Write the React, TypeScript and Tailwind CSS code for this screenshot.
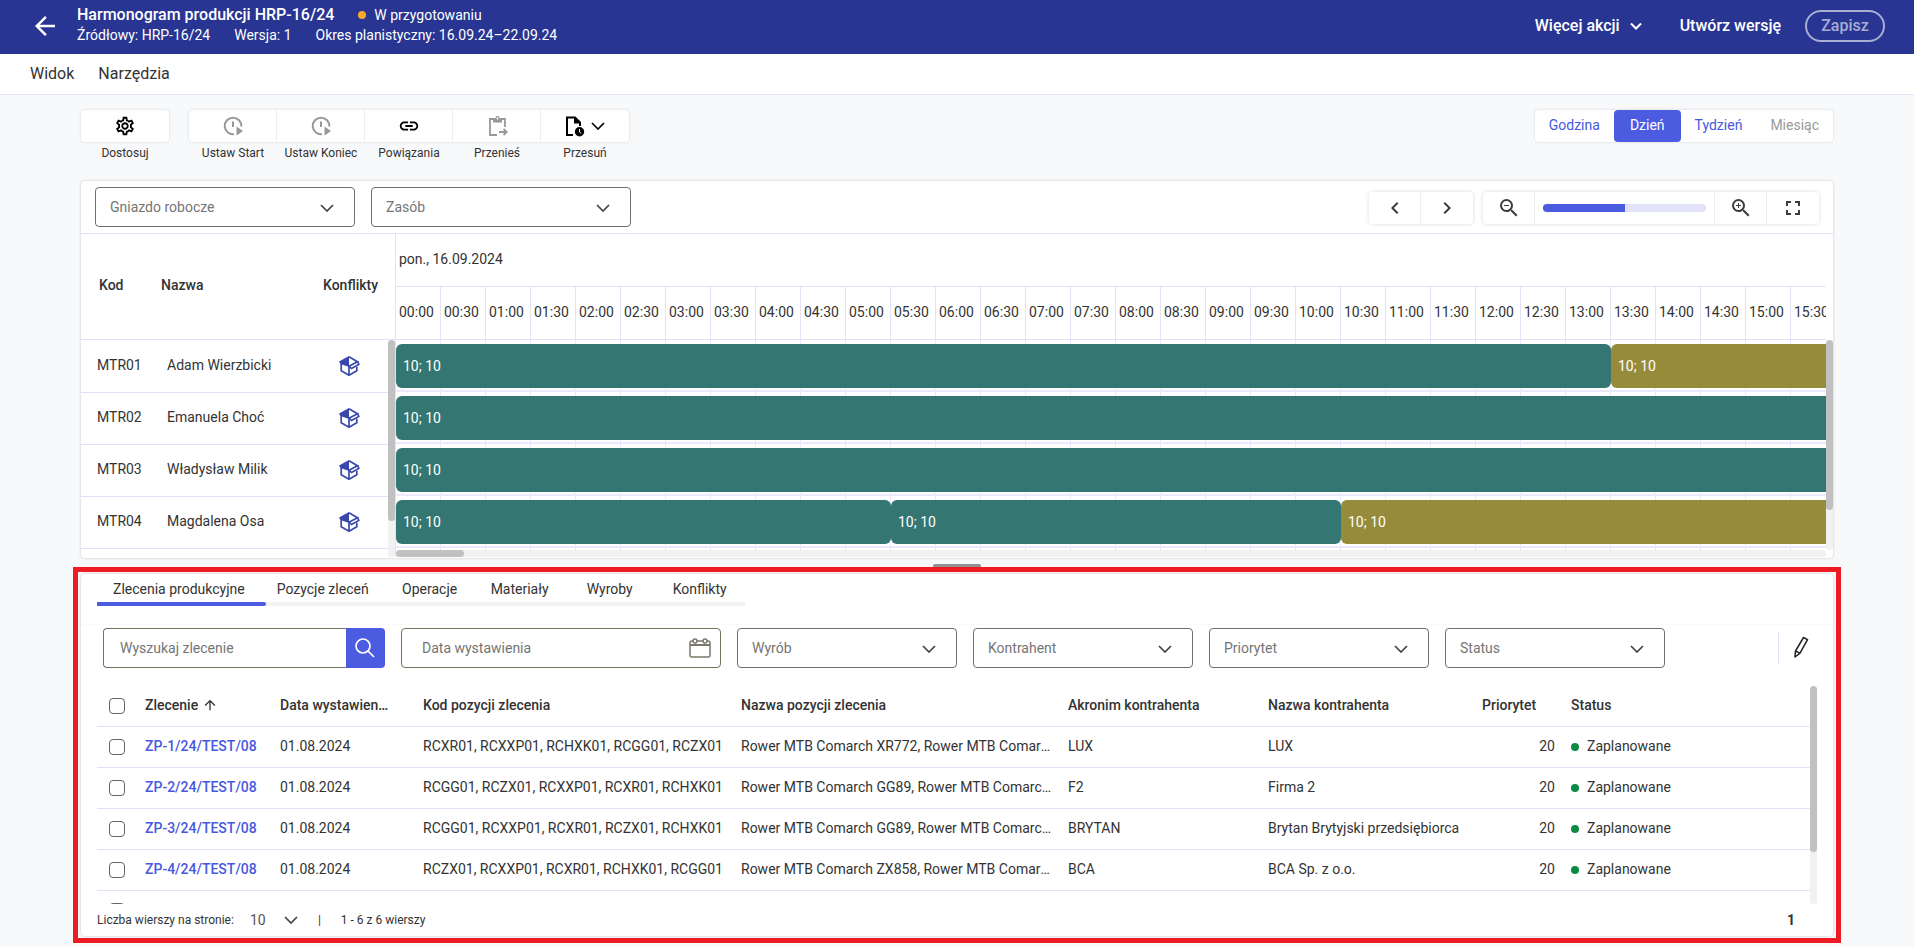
import type { ReactNode } from "react";
import { MdArrowBack, MdArrowUpward, MdChevronLeft, MdChevronRight, MdFullscreen, MdLink, MdOutlineSettings, MdZoomIn, MdZoomOut } from "react-icons/md";

const CELL = 45;

const slots = Array.from({ length: 32 }, (_, i) => {
  const h = String(Math.floor(i / 2)).padStart(2, "0");
  return `${h}:${i % 2 ? "30" : "00"}`;
});

// from / to are counted in half-hour slots
const resources = [
  { code: "MTR01", name: "Adam Wierzbicki", bars: [{ from: 0, to: 27, tone: "teal" }, { from: 27, to: 40, tone: "olive" }] },
  { code: "MTR02", name: "Emanuela Choć", bars: [{ from: 0, to: 40, tone: "teal" }] },
  { code: "MTR03", name: "Władysław Milik", bars: [{ from: 0, to: 40, tone: "teal" }] },
  { code: "MTR04", name: "Magdalena Osa", bars: [{ from: 0, to: 11, tone: "teal" }, { from: 11, to: 21, tone: "teal" }, { from: 21, to: 40, tone: "olive" }] },
];

const orders = [
  { id: "ZP-1/24/TEST/08", codes: "RCXR01, RCXXP01, RCHXK01, RCGG01, RCZX01", names: "Rower MTB Comarch XR772, Rower MTB Comarch", short: "LUX", full: "LUX" },
  { id: "ZP-2/24/TEST/08", codes: "RCGG01, RCZX01, RCXXP01, RCXR01, RCHXK01", names: "Rower MTB Comarch GG89, Rower MTB Comarch ZX", short: "F2", full: "Firma 2" },
  { id: "ZP-3/24/TEST/08", codes: "RCGG01, RCXXP01, RCXR01, RCZX01, RCHXK01", names: "Rower MTB Comarch GG89, Rower MTB Comarch XR", short: "BRYTAN", full: "Brytan Brytyjski przedsiębiorca" },
  { id: "ZP-4/24/TEST/08", codes: "RCZX01, RCXXP01, RCXR01, RCHXK01, RCGG01", names: "Rower MTB Comarch ZX858, Rower MTB Comarch", short: "BCA", full: "BCA Sp. z o.o." },
];

const tabs = ["Zlecenia produkcyjne", "Pozycje zleceń", "Operacje", "Materiały", "Wyroby", "Konflikty"];

function Chevron({ className = "" }: { className?: string }) {
  return (
    <svg aria-hidden viewBox="0 0 14 8" className={`h-2 w-3.5 fill-none stroke-current stroke-[1.7] ${className}`}>
      <path d="M1 1l6 6 6-6" />
    </svg>
  );
}

function ClockPlayIcon() {
  return (
    <svg aria-hidden viewBox="0 0 24 24" className="size-6 fill-none stroke-current stroke-2">
      <path d="M13 20.200A8.300 8.300 0 1 1 20.300 12.500" />
      <path d="M12 7.500V13" />
      <path d="M15.500 12.500v9l6.500-4.500z" className="fill-current stroke-none" />
    </svg>
  );
}

function ClipboardMoveIcon() {
  return (
    <svg aria-hidden viewBox="0 0 24 24" className="size-6 fill-none stroke-current stroke-[1.8]">
      <path d="M20 13V5H5v16h7" />
      <path d="M8 4h2.500a2 2 0 0 1 4 0H17v4.500H8z" className="fill-current stroke-none" />
      <circle cx="12.500" cy="4.500" r="0.900" className="fill-white stroke-none" />
      <path d="M14 18h7.500M18.500 14.800l3.200 3.200-3.200 3.200" />
    </svg>
  );
}

function FileClockIcon() {
  return (
    <svg aria-hidden viewBox="4 0 24 24" className="size-6 fill-none stroke-current stroke-2">
      <path d="M12 21H6V3.500h8l5 5V12" />
      <path d="M13 3.500v6h6.500z" className="fill-current stroke-none" />
      <circle cx="18.500" cy="17.800" r="4.700" className="fill-current stroke-none" />
      <path d="M18.500 15v3l1.700 1.500" className="stroke-white stroke-1" />
    </svg>
  );
}

function BoxIcon() {
  return (
    <svg aria-hidden viewBox="0 0 24 24" className="size-6 fill-none stroke-[#3949ab] stroke-[1.7]">
      <path d="M12 2L2 7.500l1.500 2.500 8.500 3z" className="fill-[#3949ab] stroke-none" />
      <path d="M12 2.700l8.500 5L12 12.300" />
      <path d="M4.200 8.500v8.200l7.800 4.500 7.800-4.500v-4" />
      <path d="M12 12v9.300" />
      <path d="M20.500 7.700l1.300 2.800-7.300 4-2.500-2.500" />
    </svg>
  );
}

function CalendarIcon() {
  return (
    <svg aria-hidden viewBox="0 0 22 20" className="h-5 w-[22px] shrink-0 fill-none stroke-[#7b7868] stroke-[1.5]">
      <rect x="1" y="3" width="20" height="16" rx="2" />
      <path d="M1 7h20" className="stroke-2" />
      <circle cx="6" cy="3" r="2" className="fill-white" />
      <circle cx="16" cy="3" r="2" className="fill-white" />
    </svg>
  );
}

function PencilIcon() {
  return (
    <svg aria-hidden viewBox="0 0 16 22" className="h-[22px] w-4 fill-none stroke-[#222] stroke-[1.5]">
      <path d="M10.500 1.500l4 2.200-7.500 13.500-5 3.800.5-6z" strokeLinejoin="round" />
      <path d="M2.500 15l4.500 2.200" />
    </svg>
  );
}

function ToolButton({ label, disabled, children }: { label: string; disabled?: boolean; children: ReactNode }) {
  return (
    <button type="button" disabled={disabled} aria-label={label} className={`flex h-8 w-[88px] items-center justify-center gap-0.5 border-r border-[#eeeef2] last:border-r-0 ${disabled ? "text-[#999]" : "text-black"}`}>
      {children}
    </button>
  );
}

function SelectBox({ label, className }: { label: string; className: string }) {
  return (
    <div className={`grid h-10 items-center ${className}`}>
      <select aria-label={label} className="col-start-1 row-start-1 h-10 w-full appearance-none rounded border border-[#6e6e6e] bg-white px-3.5 pb-px text-sm text-[#757575]">
        <option>{label}</option>
      </select>
      <Chevron className="pointer-events-none col-start-1 row-start-1 mt-0.5 mr-[21px] justify-self-end text-[#444]" />
    </div>
  );
}

function Checkbox({ label }: { label: string }) {
  return <input type="checkbox" aria-label={label} className="block size-4 appearance-none rounded border border-[#666] bg-white" />;
}

export default function App() {
  return (
    <div className="min-h-screen bg-[#f8f9fb] pb-1 font-['Roboto',sans-serif] text-sm text-[#333]">
      <header className="flex h-[54px] items-center bg-[#283593] pr-[29px] pb-0.5 pl-[30px] text-white">
        <button type="button" aria-label="Wstecz" className="mr-[17px]">
          <MdArrowBack className="size-[30px]" />
        </button>
        <div className="mb-0.5 leading-5">
          <div className="flex items-center">
            <h1 className="text-base leading-5 font-medium">Harmonogram produkcji HRP-16/24</h1>
            <span className="mr-2 ml-6 size-2 rounded-full bg-[#f9a825]" />
            <span>W przygotowaniu</span>
          </div>
          <div className="flex gap-6">
            <span>Źródłowy: HRP-16/24</span>
            <span>Wersja: 1</span>
            <span>Okres planistyczny: 16.09.24–22.09.24</span>
          </div>
        </div>
        <div className="ml-auto flex items-center text-base font-medium">
          <button type="button" className="flex items-center gap-2.5">
            Więcej akcji
            <svg aria-hidden viewBox="0 0 14 8" className="h-2 w-3.5 fill-none stroke-current stroke-2">
              <path d="M1 1.500l5 5 5-5" />
            </svg>
          </button>
          <button type="button" className="ml-9">Utwórz wersję</button>
          <button type="button" disabled className="ml-6 h-8 w-20 rounded-full border-2 border-white/60 text-white/60">Zapisz</button>
        </div>
      </header>

      <nav className="flex h-[41px] items-center gap-6 border-b border-[#e2e2f6] bg-white px-[30px] pb-px text-base">
        <a href="#widok">Widok</a>
        <a href="#narzedzia">Narzędzia</a>
      </nav>

      <main>
        <div className="mx-[81px] mt-[15px] flex items-start">
          <div>
            <div className="flex rounded bg-white shadow-[0_0_3px_rgba(0,0,0,0.15)]">
              <ToolButton label="Dostosuj"><MdOutlineSettings className="size-[22px]" /></ToolButton>
            </div>
            <p className="mt-[3px] text-center text-xs leading-4">Dostosuj</p>
          </div>
          <div className="ml-5">
            <div className="flex rounded bg-white shadow-[0_0_3px_rgba(0,0,0,0.15)]">
              <ToolButton label="Ustaw Start" disabled><ClockPlayIcon /></ToolButton>
              <ToolButton label="Ustaw Koniec" disabled><ClockPlayIcon /></ToolButton>
              <ToolButton label="Powiązania"><MdLink className="size-[22px]" /></ToolButton>
              <ToolButton label="Przenieś" disabled><ClipboardMoveIcon /></ToolButton>
              <ToolButton label="Przesuń"><FileClockIcon /><Chevron /></ToolButton>
            </div>
            <div className="mt-[3px] grid grid-cols-5 text-center text-xs leading-4">
              <span>Ustaw Start</span>
              <span>Ustaw Koniec</span>
              <span>Powiązania</span>
              <span>Przenieś</span>
              <span>Przesuń</span>
            </div>
          </div>
          <div className="ml-auto flex h-8 rounded bg-white text-[#4758e0] shadow-[0_0_3px_rgba(0,0,0,0.15)] *:pb-0.5">
            <button type="button" className="px-3.5">Godzina</button>
            <button type="button" className="rounded bg-[#4b5ce1] px-4 text-white">Dzień</button>
            <button type="button" className="px-3.5">Tydzień</button>
            <button type="button" disabled className="px-3.5 text-[#999]">Miesiąc</button>
          </div>
        </div>

        <section className="mx-[81px] mt-5 overflow-hidden rounded bg-white pb-px shadow-[0_0_3px_rgba(0,0,0,0.2)]">
          <div className="flex h-[53px] items-center gap-4 border-b border-[#e2e2f6] px-3.5">
            <SelectBox label="Gniazdo robocze" className="w-[260px]" />
            <SelectBox label="Zasób" className="w-[260px]" />
            <div className="mt-0.5 ml-auto flex h-8 rounded text-[#3c3c3c] shadow-[0_0_4px_rgba(0,0,0,0.15)]">
              <button type="button" aria-label="Poprzedni" className="flex w-[52px] items-center justify-center border-r border-[#eeeef2]"><MdChevronLeft className="size-6" /></button>
              <button type="button" aria-label="Następny" className="flex w-[52px] items-center justify-center"><MdChevronRight className="size-6" /></button>
            </div>
            <div className="mt-0.5 -ml-1.5 flex h-8 rounded text-[#3c3c3c] shadow-[0_0_4px_rgba(0,0,0,0.15)]">
              <button type="button" aria-label="Pomniejsz" className="flex w-[52px] items-center justify-center border-r border-[#eeeef2]"><MdZoomOut className="size-6" /></button>
              <div className="flex w-[180px] items-center border-r border-[#eeeef2] px-2">
                <div className="h-2 w-full overflow-hidden rounded-full bg-[#e2e3f9]">
                  <div className="h-2 w-1/2 bg-[#4b5ce1]" />
                </div>
              </div>
              <button type="button" aria-label="Powiększ" className="flex w-[52px] items-center justify-center border-r border-[#eeeef2]"><MdZoomIn className="size-6" /></button>
              <button type="button" aria-label="Pełny ekran" className="flex w-[52px] items-center justify-center"><MdFullscreen className="size-6" /></button>
            </div>
          </div>

          <div className="flex">
            <div className="w-[314px] shrink-0">
              <div className="flex h-[106px] items-center border-b border-[#e2e2f6] pb-1 pl-[18px] font-medium">
                <span className="w-[62px]">Kod</span>
                <span className="w-[162px]">Nazwa</span>
                <span>Konflikty</span>
              </div>
              <div className="flex h-[217px] overflow-hidden">
                <div className="grow">
                  {resources.map((r) => (
                    <div key={r.code} className="-mb-px flex h-[53px] items-center border-b border-[#e2e2f6] pl-4">
                      <span className="w-[70px] pb-0.5">{r.code}</span>
                      <span className="w-[170px] pb-0.5">{r.name}</span>
                      <BoxIcon />
                    </div>
                  ))}
                </div>
                <div className="w-[7px] rounded bg-[#f1f1f1]">
                  <div className="h-[181px] rounded bg-[#c1c1c1]" />
                </div>
              </div>
            </div>

            <div className="flex min-w-0 grow border-l border-[#e2e2f6]">
              <div className="min-w-0 grow overflow-hidden">
                <div className="flex h-[53px] items-center border-b border-[#e2e2f6] pb-0.5 pl-[3px]">pon., 16.09.2024</div>
                <div className="flex h-[53px] border-b border-[#e2e2f6]">
                  {slots.map((s) => (
                    <div key={s} className="flex w-[45px] shrink-0 items-center border-r border-[#e2e2f6] pb-0.5 pl-[3px]">{s}</div>
                  ))}
                </div>
                <div className="h-[210px] overflow-hidden bg-[repeating-linear-gradient(to_right,transparent_0_44px,#e9e9fb_44px_45px)]">
                  {resources.map((r) => (
                    <div key={r.code} className="flex h-[52px] border-b-2 border-[#e9e9fb] pt-1">
                      {r.bars.map((b) => (
                        <div
                          key={b.from}
                          className={`flex h-11 shrink-0 items-center rounded-md pl-[7px] text-white ${b.tone === "teal" ? "bg-[#347672]" : "bg-[#968b3a]"}`}
                          style={{ width: (b.to - b.from) * CELL }}
                        >
                          10; 10
                        </div>
                      ))}
                    </div>
                  ))}
                </div>
                <div className="h-[7px] rounded bg-[#f1f1f1]">
                  <div className="h-[7px] w-[68px] rounded bg-[#c1c1c1]" />
                </div>
              </div>
              <div className="mt-[106px] h-[210px] w-[7px] shrink-0 rounded bg-[#f1f1f1]">
                <div className="h-[170px] rounded bg-[#c1c1c1]" />
              </div>
            </div>
          </div>
        </section>

        <div className="mx-auto mt-1.5 h-[3px] w-12 rounded-t-xs bg-[#8f9194]" />

        <div className="mx-[73px] border-5 border-[#ed1c24] px-[3px] py-0.5">
          <section className="rounded bg-white shadow-[0_0_3px_rgba(0,0,0,0.2)]">
            <div className="flex border-b border-[#fafafa] pb-[18px] pl-4">
              <div>
                <div role="tablist" className="flex h-7 pt-0.5">
                  {tabs.map((t, i) => (
                    <button key={t} type="button" role="tab" aria-selected={i === 0} className="min-w-[90px] px-4">{t}</button>
                  ))}
                </div>
                <div className="h-1 bg-[#f3f3f3]">
                  <div className="h-1 w-[169px] rounded-r-xs bg-[#4b5ce1]" />
                </div>
              </div>
            </div>

            <div className="mt-[3px] flex h-10 items-center gap-4 pr-6 pl-[22px]">
              <div className="flex w-[282px]">
                <input type="text" aria-label="Wyszukaj zlecenie" placeholder="Wyszukaj zlecenie" className="h-10 min-w-0 grow rounded-l border border-r-0 border-[#757260] px-4 pb-px text-sm placeholder:text-[#757575]" />
                <button type="button" aria-label="Szukaj" className="flex h-10 w-[39px] items-center justify-center rounded-r bg-[#4b5ce1] pr-0.5 text-white">
                  <svg aria-hidden viewBox="0 0 20 20" className="size-5 fill-none stroke-current stroke-[1.7]">
                    <circle cx="8" cy="8" r="7" />
                    <path d="M13 13l6 6" />
                  </svg>
                </button>
              </div>
              <div className="flex h-10 w-[320px] items-center rounded border border-[#757260] pr-[9px]">
                <input type="text" aria-label="Data wystawienia" placeholder="Data wystawienia" className="min-w-0 grow pl-5 text-sm placeholder:text-[#757575]" />
                <CalendarIcon />
              </div>
              <SelectBox label="Wyrób" className="w-[220px]" />
              <SelectBox label="Kontrahent" className="w-[220px]" />
              <SelectBox label="Priorytet" className="w-[220px]" />
              <SelectBox label="Status" className="w-[220px]" />
              <div className="ml-auto flex h-8 items-center border-l border-[#e2e2f6] pb-0.5 pl-3.5">
                <button type="button" aria-label="Edytuj kolumny"><PencilIcon /></button>
              </div>
            </div>

            <div className="mx-4 mt-[18px] flex h-[218px] overflow-hidden">
              <div className="min-w-0 grow">
                <table className="w-full table-fixed text-left">
                  <colgroup>
                    <col className="w-10" />
                    <col className="w-[135px]" />
                    <col className="w-[143px]" />
                    <col className="w-[318px]" />
                    <col className="w-[327px]" />
                    <col className="w-[200px]" />
                    <col className="w-[214px]" />
                    <col className="w-[89px]" />
                    <col />
                  </colgroup>
                  <thead>
                    <tr className="h-10 border-b border-[#e2e2f6] *:px-2 *:pb-0.5 *:font-medium">
                      <th className="pb-0! pl-3!"><Checkbox label="Zaznacz wszystkie" /></th>
                      <th><span className="flex items-center gap-1">Zlecenie <MdArrowUpward className="size-4" /></span></th>
                      <th className="truncate pr-[26px]!">Data wystawienia</th>
                      <th>Kod pozycji zlecenia</th>
                      <th>Nazwa pozycji zlecenia</th>
                      <th>Akronim kontrahenta</th>
                      <th>Nazwa kontrahenta</th>
                      <th>Priorytet</th>
                      <th>Status</th>
                    </tr>
                  </thead>
                  <tbody>
                    {orders.map((o) => (
                      <tr key={o.id} className="h-[41px] border-b border-[#e2e2f6] *:px-2 *:pb-0.5">
                        <td className="pb-0! pl-3!"><Checkbox label={o.id} /></td>
                        <td><a href="#zlecenie" className="font-medium text-[#4758e0]">{o.id}</a></td>
                        <td>01.08.2024</td>
                        <td className="truncate">{o.codes}</td>
                        <td className="truncate">{o.names}</td>
                        <td>{o.short}</td>
                        <td className="truncate">{o.full}</td>
                        <td className="text-right">20</td>
                        <td>
                          <span className="flex items-center gap-2"><span className="mt-0.5 size-2 rounded-full bg-[#0b8a44]" />Zaplanowane</span>
                        </td>
                      </tr>
                    ))}
                    <tr className="h-[41px]">
                      <td className="pl-3"><Checkbox label="Zaznacz kolejne zlecenie" /></td>
                    </tr>
                  </tbody>
                </table>
              </div>
              <div className="h-[218px] w-[7px] shrink-0 rounded bg-[#f1f1f1]">
                <div className="h-[166px] rounded bg-[#c1c1c1]" />
              </div>
            </div>

            <footer className="flex h-8 items-center pr-[38px] pl-4 text-xs">
              <label htmlFor="page-size">Liczba wierszy na stronie:</label>
              <div className="ml-4 grid w-12 items-center">
                <select id="page-size" className="col-start-1 row-start-1 w-full appearance-none text-sm text-[#555]">
                  <option>10</option>
                </select>
                <Chevron className="pointer-events-none col-start-1 row-start-1 justify-self-end text-[#444]" />
              </div>
              <span className="ml-5">|</span>
              <span className="ml-5">1 - 6 z 6 wierszy</span>
              <span className="ml-auto text-sm font-bold">1</span>
            </footer>
          </section>
        </div>
      </main>
    </div>
  );
}
